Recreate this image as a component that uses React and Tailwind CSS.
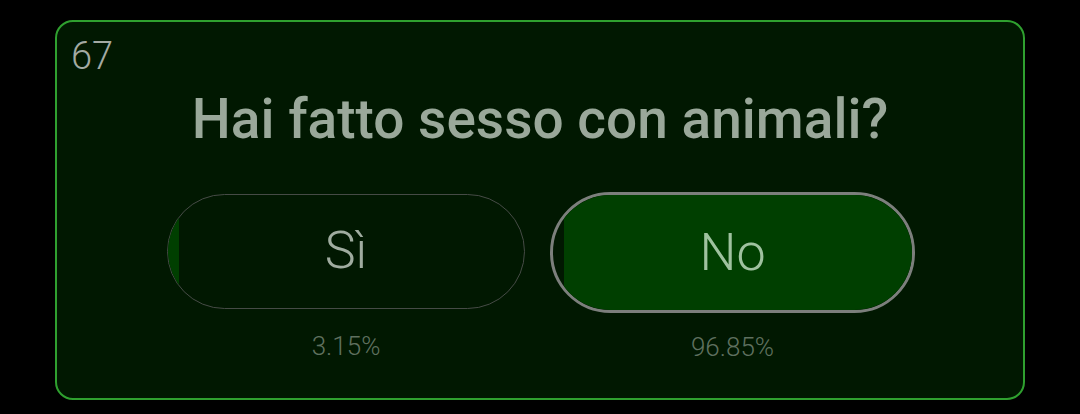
import React from 'react';

const options = [
  { label: 'Sì', pct: 3.15, offset: 0, selected: false },
  { label: 'No', pct: 96.85, offset: 3.15, selected: true },
];

const App = () => {
  return (
    <div className="w-[1080px] h-[414px] bg-black pt-5 pl-[55px]" style={{ fontFamily: 'Roboto, "Noto Sans", sans-serif' }}>
      <div className="w-[970px] h-[380px] rounded-[18px] border-2 border-[#2fa02f] bg-[#011801] flex flex-col">
        {/* question number */}
        <div className="pl-[14px] pt-[15px] text-[38px] leading-none font-light text-[#a3aaa3]">67</div>

        {/* question */}
        <div className="mt-[17px] text-center text-[55px] leading-none font-medium text-[#9aa89a]">
          Hai fatto sesso con animali?
        </div>

        {/* answers */}
        <div className="mt-[45px] flex justify-center items-center gap-[25px] pl-[2px]">
          {options.map((opt) => (
            <div key={opt.label} className="flex flex-col items-center">
              <div
                className={
                  opt.selected
                    ? 'relative w-[365px] h-[121px] rounded-full border-[3px] border-[#7c7f7c] overflow-hidden flex items-center justify-center'
                    : 'relative w-[358px] h-[115px] rounded-full border border-[#464b46] overflow-hidden flex items-center justify-center'
                }
              >
                <div
                  className="absolute top-0 bottom-0 bg-[#003f00]"
                  style={{ left: `${opt.offset}%`, width: `${opt.pct}%` }}
                />
                <span
                  className={
                    opt.selected
                      ? 'relative text-[52px] leading-none font-light text-[#9fc29f]'
                      : 'relative text-[52px] leading-none font-light text-[#a0aca0]'
                  }
                >
                  {opt.label}
                </span>
              </div>
              <div className={opt.selected ? 'mt-[21px] text-[26px] leading-none font-light text-[#5f705f]' : 'mt-[24px] text-[26px] leading-none font-light text-[#5f705f]'}>
                {opt.pct.toFixed(2)}%
              </div>
            </div>
          ))}
        </div>
      </div>
    </div>
  );
};

export default App;
